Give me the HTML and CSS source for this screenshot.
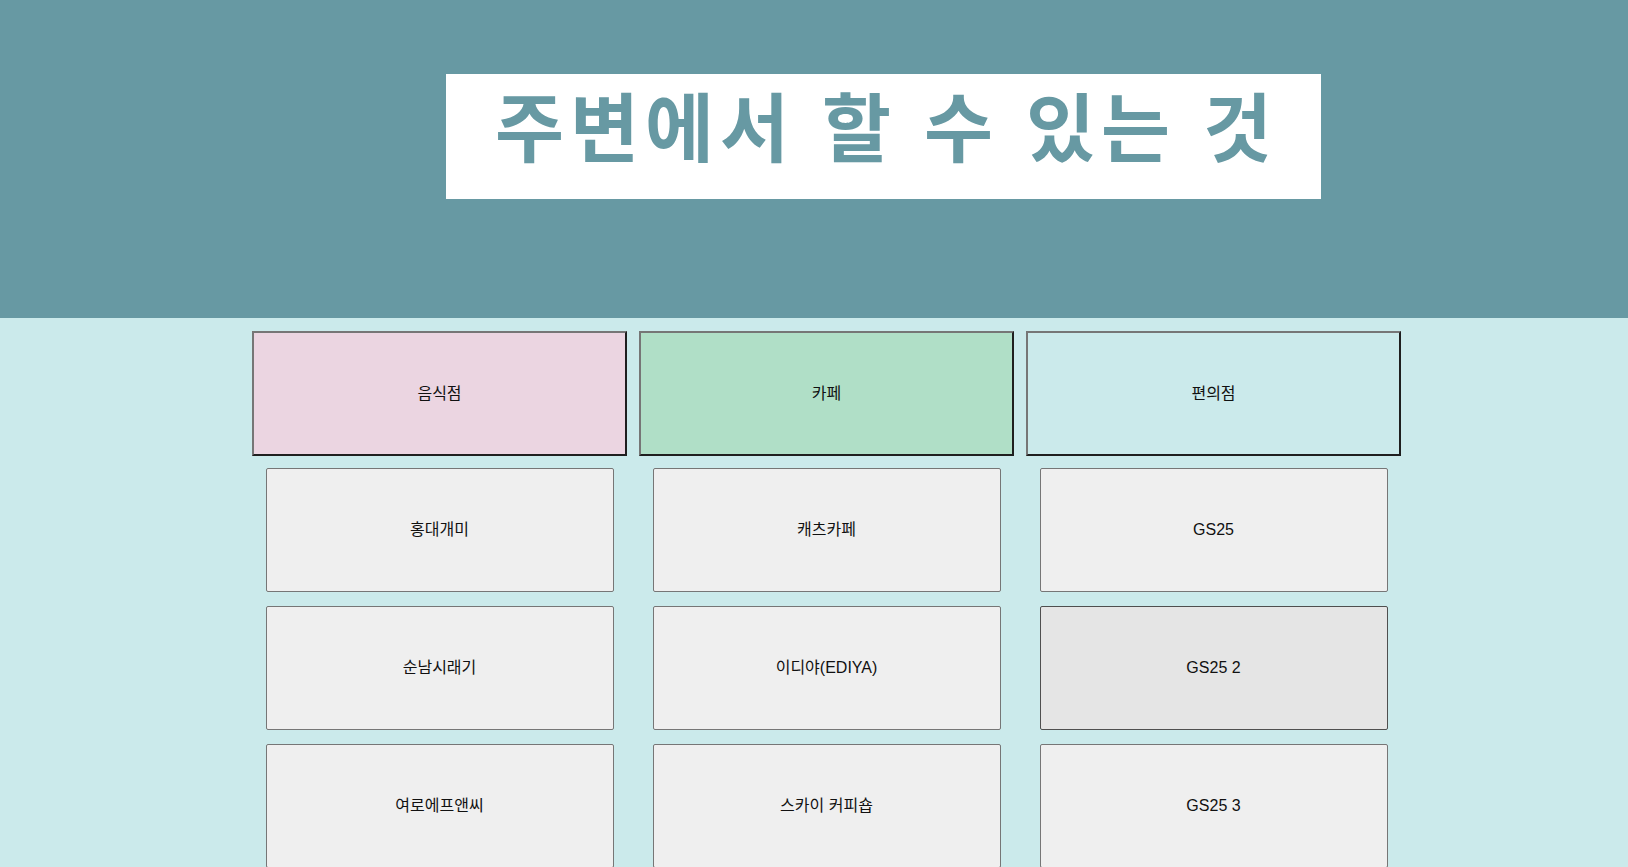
FILE: index.html
```html
<!DOCTYPE html>
<html lang="ko">
<head>
<meta charset="utf-8">
<title>주변에서 할 수 있는 것</title>
<link rel="stylesheet" href="styles.css">
</head>
<body>
<header class="hero">
  <h1 class="hero-title">주변에서 할 수 있는 것</h1>
</header>
<main class="board">
  <section class="column">
    <div class="category category-food">음식점</div>
    <div class="item">홍대개미</div>
    <div class="item">순남시래기</div>
    <div class="item">여로에프앤씨</div>
  </section>
  <section class="column">
    <div class="category category-cafe">카페</div>
    <div class="item">캐츠카페</div>
    <div class="item">이디야(EDIYA)</div>
    <div class="item">스카이 커피숍</div>
  </section>
  <section class="column">
    <div class="category category-store">편의점</div>
    <div class="item">GS25</div>
    <div class="item item-hover">GS25 2</div>
    <div class="item">GS25 3</div>
  </section>
</main>
</body>
</html>
```

FILE: styles.css
```css
html, body {
  margin: 0;
  padding: 0;
}

body {
  background: #cbeaeb;
  font-family: "Liberation Sans", "Noto Sans CJK KR", Arial, sans-serif;
  color: #111;
  overflow: hidden;
}

.hero {
  background: #6799a3;
  height: 318px;
  padding-top: 74px;
  box-sizing: border-box;
}

.hero-title {
  margin: 0 0 0 446px;
  width: 875px;
  height: 125px;
  box-sizing: border-box;
  background: #ffffff;
  color: #6799a3;
  font-family: "Noto Sans CJK KR", "Liberation Sans", sans-serif;
  font-weight: 700;
  font-size: 75px;
  letter-spacing: 6px;
  line-height: 1;
  padding: 12px 0 0 6px;
  text-align: center;
}

.board {
  display: flex;
  gap: 12px;
  margin-left: 252px;
  padding-top: 13px;
}

.column {
  width: 375px;
  display: flex;
  flex-direction: column;
  align-items: center;
  gap: 14px;
}

.category {
  width: 375px;
  height: 125px;
  margin-bottom: -2px;
  box-sizing: border-box;
  display: flex;
  align-items: center;
  justify-content: center;
  font-size: 16px;
  line-height: 1;
  border: 2px solid;
  border-color: #767676 #1f1f1f #1f1f1f #767676;
}

.category-food { background: #ebd5e1; }
.category-cafe { background: #b0dfc7; }
.category-store { background: #cbeaeb; }

.item {
  width: 348px;
  height: 124px;
  box-sizing: border-box;
  display: flex;
  align-items: center;
  justify-content: center;
  background: #efefef;
  border: 1px solid #767676;
  border-radius: 2px;
  font-size: 16px;
  line-height: 1;
}

.item-hover {
  background: #e5e5e5;
  border-color: #4f4f4f;
}
```
